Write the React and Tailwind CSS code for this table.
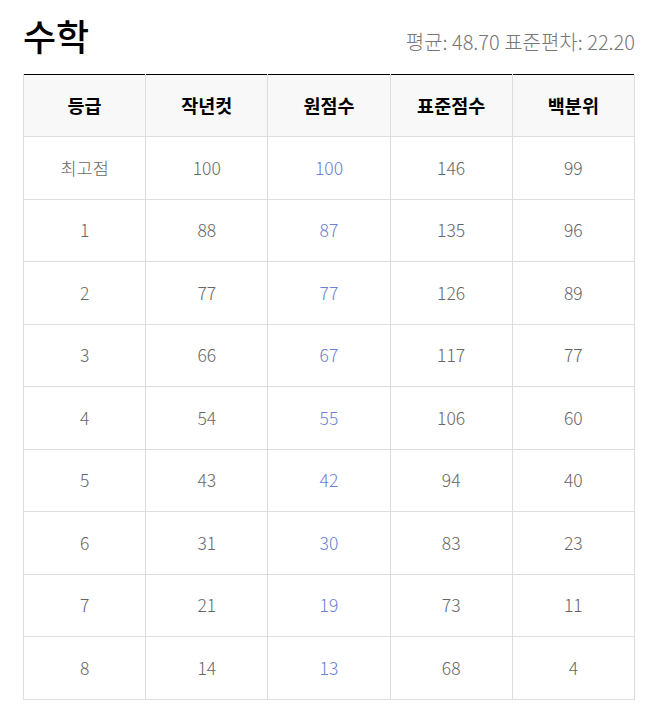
const rows = [
  ["최고점", 100, 100, 146, 99],
  [1, 88, 87, 135, 96],
  [2, 77, 77, 126, 89],
  [3, 66, 67, 117, 77],
  [4, 54, 55, 106, 60],
  [5, 43, 42, 94, 40],
  [6, 31, 30, 83, 23],
  [7, 21, 19, 73, 11],
  [8, 14, 13, 68, 4],
];

const headers = ["등급", "작년컷", "원점수", "표준점수", "백분위"];

export default function App() {
  return (
    <div className="min-h-screen bg-white px-[23px] pt-[10px] font-['Noto_Sans_CJK_KR',_'Noto_Sans',_sans-serif] text-[#222]">
      <div className="flex w-[612px] items-end justify-between pb-[13px]">
        <h1 className="text-[36px] font-medium leading-[51px] text-black">수학</h1>
        <p className="pb-[6px] text-[20px] font-light leading-[26px] text-[#777]">평균: 48.70 표준편차: 22.20</p>
      </div>
      <table className="w-[612px] table-fixed border-collapse border-t border-t-black text-center">
        <thead>
          <tr className="h-[62px] bg-[#f8f8f8]">
            {headers.map((h) => (
              <th key={h} className="border-x border-b border-[#dddddd] text-[18.5px] font-bold text-black">
                {h}
              </th>
            ))}
          </tr>
        </thead>
        <tbody>
          {rows.map((row) => (
            <tr key={row[0]} className="h-[62.5px]">
              {row.map((cell, i) => (
                <td
                  key={i}
                  className={`border border-[#dddddd] text-[17.5px] font-light ${i === 2 ? "text-[#6b80d8]" : "text-[#666]"}`}
                >
                  {cell}
                </td>
              ))}
            </tr>
          ))}
        </tbody>
      </table>
    </div>
  );
}
